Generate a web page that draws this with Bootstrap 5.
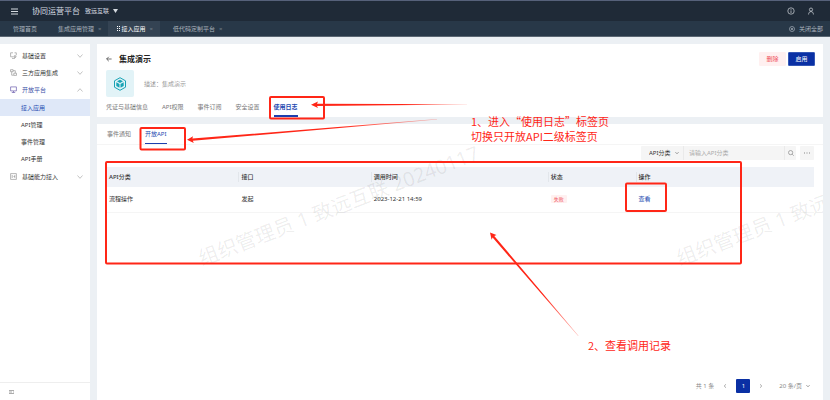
<!DOCTYPE html>
<html lang="zh-CN">
<head>
<meta charset="utf-8">
<meta name="viewport" content="width=device-width, initial-scale=1">
<title>协同运营平台</title>
<link href="https://cdn.jsdelivr.net/npm/bootstrap@5.3.0/dist/css/bootstrap.min.css" rel="stylesheet">
<style>
body{font-family:"Noto Sans","Noto Sans CJK SC",sans-serif;font-size:6px;line-height:10px;color:#333;background:#ecf0f4}
a{color:inherit;text-decoration:none}
svg{display:block;flex:none}
.ic{fill:none;stroke:currentColor;stroke-width:1}
.thin{stroke-width:.7}
.dim{color:#888}
button,input,select{font:inherit;color:inherit}
.topbar{height:21px;border-top:1px solid #56617a;background:#1f2a37;color:#d5dae0;padding:0 15px 0 11px}
.brand{font-size:8px;margin-left:14px}
.org{margin-left:5px}
.info{margin-right:12px}
.tabbar{height:16px;background:#283848;border-bottom:1px solid #5b6773;color:#a9b2bb;padding-right:7px}
.wtab{padding:0 7px 0 9px;gap:4px}
.wtab.first{padding:0 12px 0 13px}
.wtab.on{background:#344353;color:#fff}
.drag{margin-right:1px}
.wtab:last-of-type{margin-left:4px}
.wtab button,.plain{border:0;background:none;padding:0}
.wtab button{color:#75818d}
.work{padding:7px 7px 0 0;min-height:0}
.side{width:90px;margin-right:7px;background:#fff}
.menu{padding-top:3px}
.menu a{height:17px}
.top{padding:0 7px 0 10px;gap:5px}
.top svg:last-child{margin-left:auto;color:#aaa}
.top svg:first-child{color:#999}
.sub{padding:1px 0}
.sub a{padding-left:21px}
.sub .on{background:#dfe8f8;color:#2349b0}
.top.open{color:#3c50a8}
.top.open svg:first-child{color:#6a5cae}
.sidefoot{height:18px;border-top:1px solid #eee;padding-left:9px;color:#888}
.panel{background:#fff}
.headcard{padding:8px 8px 0 9px;margin-bottom:7px}
.head-row{height:14px}
.ttl{font-size:8px;font-weight:700;color:#222;margin:0 0 0 7px;line-height:12px}
.btn-x{--bs-btn-padding-x:0;--bs-btn-padding-y:1px;--bs-btn-font-size:6px;--bs-btn-line-height:10px;--bs-btn-border-radius:1px;width:27px;height:14px;line-height:10px}
.btn-del{--bs-btn-bg:#fff0f0;--bs-btn-color:#f0525c;--bs-btn-border-color:#fff0f0}
.btn-go{--bs-btn-bg:#0a30a4;--bs-btn-color:#fff;--bs-btn-border-color:#3557b5}
.acts{gap:2px}
.appicon{width:28px;height:27px;background:#e2f3f7;border-radius:2px}
.desc{color:#999;margin-left:10px}
.app-row{margin-top:4px}
.tabs a{color:#777;border-bottom:1px solid transparent;padding:5px 0 4px}
.tabs .on{color:#2349b0;border-color:#1d3fae}
.tabs-a{gap:14px}
.tabs-a a{padding-bottom:3px}
.tabs-a a.on{font-weight:700;border-bottom-width:2px}
.tabs-b{gap:14px;padding-left:10px;border-bottom:1px solid #f5f5f5}
.body2{padding:1px 9px 0}
.tool{height:14px;margin-bottom:7px;gap:4px}
.filter{background:#f5f5f5;border-radius:1px}
.filter select{border:0;background:none;appearance:none;padding:0;width:26px}
.filter label{padding:0 4px 0 8px;border-right:1px solid #eaeaea}
.filter input{border:0;background:none;width:100px;padding:0 5px;outline:0}
.filter input::placeholder{color:#aaa}
.filter button{width:12px;border-left:1px solid #eaeaea}
.more{background:#f5f5f5!important;width:14px;border-radius:1px}
.log{table-layout:fixed;width:100%}
.log th{height:20px;background:#eff2f7;font-weight:500;padding:0 3px}
.log th+th{background-image:linear-gradient(#e2e6eb,#e2e6eb);background-size:1px 10px;background-repeat:no-repeat;background-position:0 50%}
.log td{height:25px;padding:0 3px;border-bottom:1px solid #f5f5f5}
.c1{width:18.7%}.c3{width:25%}.c4{width:12.4%}
.fail{background:#fff0f0;color:#f0525c;padding:1px 3px;font-size:5px;border-radius:1px}
.look{color:#2349b0}
.pager{margin-top:auto;padding:0 13px 7px 0;color:#888;gap:9px}
.pg{width:14px;height:14px;background:#0a30a4;color:#fff;border-radius:1px}
.size{margin-left:7px}
.wm{inset:0;width:100%;height:100%;pointer-events:none}
.wm text{font-size:20px;fill:#000;fill-opacity:.075}
.notes{left:0;top:0;pointer-events:none}
.say{font-family:"Noto Sans CJK SC",sans-serif;color:#ff2617;font-size:11px;line-height:15px}
.say1{left:471px;top:114px}
.say2{left:588px;top:338px}
</style>
<script src="https://cdn.jsdelivr.net/npm/bootstrap@5.3.0/dist/js/bootstrap.bundle.min.js"></script>
</head>
<body class="vh-100 d-flex flex-column overflow-hidden position-relative">
<header class="topbar d-flex align-items-center">
  <button class="plain" aria-label="菜单"><svg class="ic" width="7" height="7" viewBox="0 0 7 7"><path d="M0 1h7M0 3.5h7M0 6h7"/></svg></button>
  <span class="brand">协同运营平台</span>
  <button class="plain org d-flex align-items-center">致远互联<svg class="ms-1" width="5" height="4" viewBox="0 0 5 4" fill="currentColor"><path d="M0 0h5L2.5 4z"/></svg></button>
  <button class="plain info ms-auto" aria-label="信息"><svg class="ic thin" width="8" height="8" viewBox="0 0 8 8"><circle cx="4" cy="4" r="3.2"/><path d="M4 2v.8M4 3.4V6"/></svg></button>
  <button class="plain" aria-label="用户"><svg class="ic thin" width="8" height="8" viewBox="0 0 8 8"><circle cx="4" cy="2.6" r="1.6"/><path d="M1.6 7.5c0-2 1-2.9 2.4-2.9s2.4.9 2.4 2.9"/></svg></button>
</header>
<nav class="tabbar d-flex">
  <div class="wtab first d-flex align-items-center"><a href="#">管理首页</a></div>
  <div class="wtab d-flex align-items-center"><a href="#">集成应用管理</a><button aria-label="关闭">×</button></div>
  <div class="wtab on d-flex align-items-center"><a href="#" class="d-flex align-items-center"><svg class="drag" width="3" height="6" viewBox="0 0 3 6" fill="currentColor"><path d="M0 0h1v1H0zM2 0h1v1H2zM0 2h1v1H0zM2 2h1v1H2zM0 4h1v1H0zM2 4h1v1H2z"/></svg>接入应用</a><button aria-label="关闭">×</button></div>
  <div class="wtab d-flex align-items-center"><a href="#">低代码定制平台</a><button aria-label="关闭">×</button></div>
  <button class="plain ms-auto d-flex align-items-center"><svg class="ic thin me-1" width="6" height="6" viewBox="0 0 6 6"><circle cx="3" cy="3" r="2.5"/><path d="M2 2l2 2M4 2L2 4"/></svg>关闭全部</button>
</nav>
<div class="work d-flex flex-grow-1">
  <aside class="side d-flex flex-column flex-shrink-0">
    <nav class="menu d-flex flex-column flex-grow-1">
      <a href="#" class="top d-flex align-items-center"><svg class="ic thin" width="7" height="7" viewBox="0 0 7 7"><path d="M3 .8H.6v4h2.8M2 6.4h3M4.5.8h1.8v2.4M5 4v2"/><circle cx="5" cy="4.5" r="1"/></svg>基础设置<svg class="ic thin" width="6" height="6" viewBox="0 0 6 6"><path d="M.5 1.5L3 4.3l2.5-2.8"/></svg></a>
      <a href="#" class="top d-flex align-items-center"><svg class="ic thin" width="7" height="7" viewBox="0 0 7 7"><path d="M.5.7h2.6v2H.5zM1.7 2.7v3.5h2M3.8 4.2h2.7v2.2H3.8zM3.1 1.7h2.2v2.5"/></svg>三方应用集成<svg class="ic thin" width="6" height="6" viewBox="0 0 6 6"><path d="M.5 1.5L3 4.3l2.5-2.8"/></svg></a>
      <a href="#" class="top open d-flex align-items-center"><svg class="ic thin" width="7" height="7" viewBox="0 0 7 7"><path d="M.6.9h5.8v4H.6zM3.5 5v1.4M1.8 6.5h3.4"/></svg>开放平台<svg class="ic thin" width="6" height="6" viewBox="0 0 6 6"><path d="M.5 4.5L3 1.7l2.5 2.8"/></svg></a>
      <div class="sub d-flex flex-column">
        <a href="#" class="on d-flex align-items-center">接入应用</a>
        <a href="#" class="d-flex align-items-center">API管理</a>
        <a href="#" class="d-flex align-items-center">事件管理</a>
        <a href="#" class="d-flex align-items-center">API手册</a>
      </div>
      <a href="#" class="top d-flex align-items-center"><svg class="ic thin" width="7" height="7" viewBox="0 0 7 7"><path d="M.6.6h5.8v5.8H.6zM2.2 2v3M3.5 3.5H5M4.8 2v3"/></svg>基础能力接入<svg class="ic thin" width="6" height="6" viewBox="0 0 6 6"><path d="M.5 1.5L3 4.3l2.5-2.8"/></svg></a>
    </nav>
    <div class="sidefoot d-flex align-items-center"><button class="plain" aria-label="收起"><svg class="ic thin" width="5" height="4" viewBox="0 0 5 4"><path d="M0 .5h5M0 2h3M0 3.5h5M4 2h1"/></svg></button></div>
  </aside>
  <main class="flex-grow-1 d-flex flex-column">
    <section class="panel headcard">
      <div class="head-row d-flex align-items-center">
        <a href="#" aria-label="返回"><svg class="ic thin" width="6" height="6" viewBox="0 0 6 6"><path d="M5.6 3H.7M2.8.8L.6 3l2.2 2.2"/></svg></a>
        <h1 class="ttl">集成演示</h1>
        <div class="acts ms-auto d-flex"><button class="btn btn-x btn-del">删除</button><button class="btn btn-x btn-go">启用</button></div>
      </div>
      <div class="app-row d-flex align-items-center">
        <div class="appicon d-flex align-items-center justify-content-center"><svg width="14" height="14" viewBox="0 0 14 14"><path d="M7 .7l5.5 3.1v6.4L7 13.3l-5.5-3.100V3.800z" fill="none" stroke="#17a3b5"/><path d="M7 2.700l3 1.600L7 6 4 4.300zM3.300 5.200l3.200 1.800v3.800L3.300 9zM10.700 5.200L7.500 7v3.800L10.700 9z" fill="#17a3b5"/></svg></div>
        <span class="desc">描述：集成演示</span>
      </div>
      <nav class="tabs tabs-a d-flex"><a href="#">凭证与基础信息</a><a href="#">API权限</a><a href="#">事件订阅</a><a href="#">安全设置</a><a href="#" class="on">使用日志</a></nav>
    </section>
    <section class="panel flex-grow-1 d-flex flex-column position-relative overflow-hidden">
      <nav class="tabs tabs-b d-flex"><a href="#">事件通知</a><a href="#" class="on">开放API</a></nav>
      <div class="body2">
        <div class="tool d-flex justify-content-end">
          <div class="filter d-flex">
            <label class="d-flex align-items-center"><select aria-label="分类"><option>API分类</option></select><svg class="ic thin dim" width="4" height="4" viewBox="0 0 4 4"><path d="M.3 1L2 2.9 3.700 1"/></svg></label>
            <input type="text" placeholder="请输入API分类" aria-label="API分类">
            <button class="plain d-flex align-items-center justify-content-center" aria-label="搜索"><svg class="ic thin dim" width="6" height="6" viewBox="0 0 6 6"><circle cx="2.6" cy="2.6" r="2.1"/><path d="M4.2 4.2l1.500 1.500"/></svg></button>
          </div>
          <button class="plain more" aria-label="更多"><svg class="mx-auto" width="6" height="2" viewBox="0 0 6 2" fill="#888"><path d="M0 .5h1v1H0zM2.5.5h1v1h-1zM5 .5h1v1H5z"/></svg></button>
        </div>
        <table class="log">
          <colgroup><col class="c1"><col class="c1"><col class="c3"><col class="c4"><col></colgroup>
          <thead><tr><th>API分类</th><th>接口</th><th>调用时间</th><th>状态</th><th>操作</th></tr></thead>
          <tbody><tr><td>流程操作</td><td>发起</td><td>2023-12-21 14:59</td><td><span class="fail">失败</span></td><td><a href="#" class="look">查看</a></td></tr></tbody>
        </table>
      </div>
      <div class="pager d-flex align-items-center justify-content-end">
        <span>共 1 条</span>
        <a href="#" aria-label="上一页"><svg class="ic thin" width="4" height="4" viewBox="0 0 4 4"><path d="M3 .3L1.2 2 3 3.700"/></svg></a>
        <a href="#" class="pg d-flex align-items-center justify-content-center">1</a>
        <a href="#" aria-label="下一页"><svg class="ic thin" width="4" height="4" viewBox="0 0 4 4"><path d="M1 .3L2.8 2 1 3.700"/></svg></a>
        <button class="plain size d-flex align-items-center">20 条/页<svg class="ic thin ms-1" width="4" height="4" viewBox="0 0 4 4"><path d="M.3 1L2 2.9 3.700 1"/></svg></button>
      </div>
      <svg class="wm position-absolute" aria-hidden="true">
        <text transform="translate(105 142) rotate(-21)">组织管理员 1 致远互联 20240117</text>
        <text transform="translate(583 142) rotate(-21)">组织管理员 1 致远互联 20240117</text>
      </svg>
    </section>
  </main>
</div>
<svg class="notes position-absolute" width="830" height="400" viewBox="0 0 830 400" aria-hidden="true">
  <defs>
    <linearGradient id="fade" x1="0" x2="1"><stop offset=".6" stop-color="#ff2617"/><stop offset="1" stop-color="#ff2617" stop-opacity=".3"/></linearGradient>
  </defs>
  <g fill="none" stroke="#ff2617" stroke-width="2">
    <rect x="270" y="97" width="54" height="21.5" rx="1"/>
    <rect x="140.5" y="128" width="44.5" height="21.5" rx="1"/>
    <rect x="106" y="162" width="635" height="101.5" rx="1"/>
    <rect x="626" y="183.5" width="40" height="27.5" rx="1"/>
  </g>
  <g fill="url(#fade)">
    <path d="M311 104.7l7-3.200-1 2.200 150 .6v.3l-150 1.400 1 2z"/>
    <path d="M187 139.800l6-3.600-.6 2.400L437 119v.4L192.800 140.800l1 2.200z"/>
    <path d="M490 232.500l6.500 2.500-2.200 1 84.200 99.700-.4.3L492.600 237.600l-1 2.100z"/>
  </g>
</svg>
<div class="say say1 position-absolute">1、进入“使用日志”标签页<br>切换只开放API二级标签页</div>
<div class="say say2 position-absolute">2、查看调用记录</div>
</body>
</html>
